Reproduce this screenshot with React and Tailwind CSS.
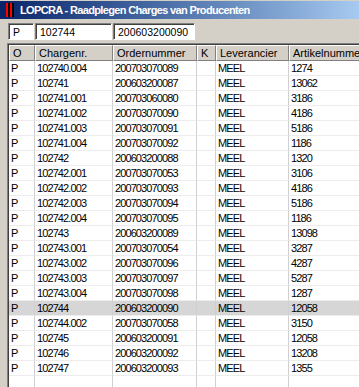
import React from "react";

const rows = [
  ["P", "102740.004", "200703070089", "", "MEEL", "1274"],
  ["P", "102741", "200603200087", "", "MEEL", "13062"],
  ["P", "102741.001", "200703060080", "", "MEEL", "3186"],
  ["P", "102741.002", "200703070090", "", "MEEL", "4186"],
  ["P", "102741.003", "200703070091", "", "MEEL", "5186"],
  ["P", "102741.004", "200703070092", "", "MEEL", "1186"],
  ["P", "102742", "200603200088", "", "MEEL", "1320"],
  ["P", "102742.001", "200703070053", "", "MEEL", "3106"],
  ["P", "102742.002", "200703070093", "", "MEEL", "4186"],
  ["P", "102742.003", "200703070094", "", "MEEL", "5186"],
  ["P", "102742.004", "200703070095", "", "MEEL", "1186"],
  ["P", "102743", "200603200089", "", "MEEL", "13098"],
  ["P", "102743.001", "200703070054", "", "MEEL", "3287"],
  ["P", "102743.002", "200703070096", "", "MEEL", "4287"],
  ["P", "102743.003", "200703070097", "", "MEEL", "5287"],
  ["P", "102743.004", "200703070098", "", "MEEL", "1287"],
  ["P", "102744", "200603200090", "", "MEEL", "12058"],
  ["P", "102744.002", "200703070058", "", "MEEL", "3150"],
  ["P", "102745", "200603200091", "", "MEEL", "12058"],
  ["P", "102746", "200603200092", "", "MEEL", "13208"],
  ["P", "102747", "200603200093", "", "MEEL", "1355"],
  ["", "", "", "", "", ""],
];

const headers = ["O", "Chargenr.", "Ordernummer", "K", "Leverancier", "Artikelnummer"];
const cols = "grid grid-cols-[26px_78px_84px_19px_73px_110px]";

function Field({ value, width }) {
  return (
    <div className={`${width} h-[17px] border-t border-l border-[#808080] border-b border-r border-b-white border-r-white`}>
      <div className="h-full border-t border-l border-[#404040] bg-white pl-[3px] text-[10.5px] leading-[14px] text-black">
        {value}
      </div>
    </div>
  );
}

export default function App() {
  return (
    <div className="w-[359px] h-[387px] overflow-hidden bg-[#d4d0c8] font-['Liberation_Sans',Arial,sans-serif]">
      {/* title bar */}
      <div className="mt-[1px] h-[18px] flex items-center bg-gradient-to-r from-[#0a246a] to-[#a6caf0]">
        <div className="ml-[3px] w-[11px] h-[14px] flex bg-[#0a246a]">
          <div className="ml-[3px] w-[2px] h-full bg-[#ff0000]" />
          <div className="w-[2px] h-full bg-black" />
          <div className="w-[2px] h-full bg-[#ff0000]" />
          <div className="w-[2px] h-full bg-black" />
        </div>
        <span className="ml-[6px] text-white font-bold text-[11px] tracking-[-0.65px]">
          LOPCRA - Raadplegen Charges van Producenten
        </span>
      </div>

      {/* input row */}
      <div className="mt-[4px] ml-[8px] flex gap-[1px]">
        <Field value="P" width="w-[26px]" />
        <Field value="102744" width="w-[77px]" />
        <Field value="200603200090" width="w-[82px]" />
      </div>

      {/* grid */}
      <div className="mt-[3px] ml-[7px] border-t border-l border-[#808080]">
        <div className="border-t border-l border-[#404040] bg-white">
          <div className={cols}>
            {headers.map((h) => (
              <div
                key={h}
                className="h-[16px] bg-[#d4d0c8] border-t border-l border-white border-r border-b border-r-[#808080] border-b-[#808080] pl-[3px] text-[11px] leading-[14px] text-black whitespace-nowrap overflow-hidden"
              >
                {h}
              </div>
            ))}
          </div>
          {rows.map((r, i) => (
            <div key={i} className={`${cols} ${i === 16 ? "bg-[#d6d6d6]" : ""}`}>
              {r.map((c, j) => (
                <div
                  key={j}
                  className="h-[15px] border-r border-b border-r-[#d0d0d0] border-b-[#ececec] pl-[2px] pt-[1px] text-[11px] leading-[13px] tracking-[-0.9px] text-black whitespace-nowrap overflow-hidden"
                >
                  {c}
                </div>
              ))}
            </div>
          ))}
        </div>
      </div>
    </div>
  );
}
